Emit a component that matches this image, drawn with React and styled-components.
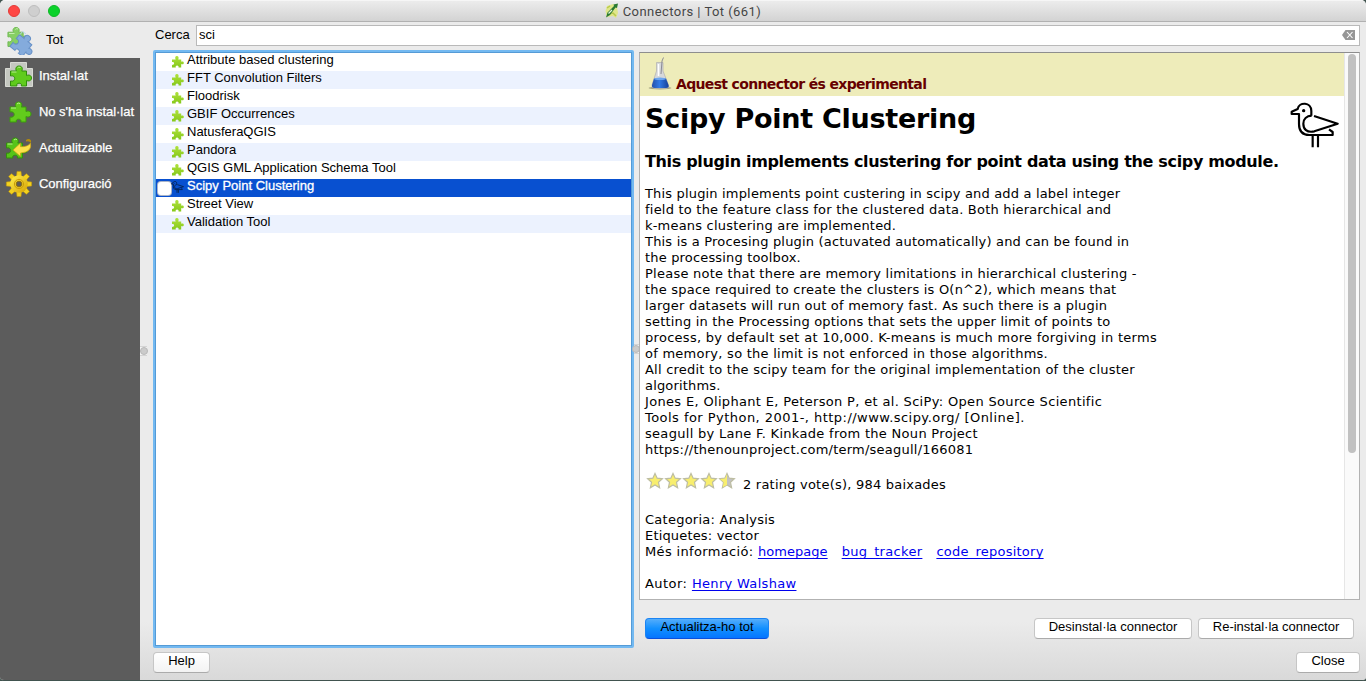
import React from "react";
import styled, { createGlobalStyle } from "styled-components";

const sans = `"Liberation Sans", Arial, sans-serif`;

const GlobalStyle = createGlobalStyle`
  * { box-sizing: border-box; }
  html, body { margin: 0; padding: 0; background: #41544f; overflow: hidden; }
  body { font-family: ${sans}; font-size: 13px; color: #000; }
  svg { display: block; flex: none; }
`;

const Window = styled.div`
  width: 1366px;
  height: 681px;
  display: flex;
  flex-direction: column;
  background: #ebebeb;
  border-bottom: 1px solid #41544f;
  border-radius: 5px 5px 4px 4px;
  overflow: hidden;
`;

const TitleBar = styled.header`
  position: relative;
  height: 22px;
  flex: none;
  display: flex;
  align-items: center;
  justify-content: center;
  gap: 4px;
  background: linear-gradient(#ececec, #d3d3d3);
  border-top: 1px solid #f6f6f6;
  border-bottom: 1px solid #b1b1b1;
  color: #454545;
  font-family: Roboto, ${sans};
  font-size: 13px;
  letter-spacing: 0.44px;
`;

const Lights = styled.div`
  position: absolute;
  left: 8px;
  top: 4px;
  display: flex;
  gap: 8px;
`;

const Light = styled.span`
  width: 12px;
  height: 12px;
  border-radius: 50%;
  background: ${(p) => p.$fill};
  border: 1px solid ${(p) => p.$edge};
`;

const Body = styled.div`
  flex: 1;
  display: flex;
  min-height: 0;
`;

const Sidebar = styled.nav`
  width: 140px;
  flex: none;
  background: #5c5c5c;
`;

const NavItem = styled.div`
  height: 36px;
  display: flex;
  align-items: center;
  gap: ${(p) => (p.$active ? 10 : 4)}px;
  padding-left: ${(p) => (p.$active ? 6 : 5)}px;
  background: ${(p) => (p.$active ? "#ebebeb" : "transparent")};
  color: ${(p) => (p.$active ? "#000" : "#fff")};
  -webkit-text-stroke: ${(p) => (p.$active ? 0 : 0.25)}px currentColor;
  white-space: nowrap;
`;

const NavIcon = styled.span`
  width: 30px;
  height: 30px;
  flex: none;
`;

const NavLabel = styled.span`
  line-height: 16px;
  letter-spacing: -0.04px;
`;

const Main = styled.main`
  flex: 1;
  min-width: 0;
  display: flex;
  flex-direction: column;
  background: linear-gradient(#ebebeb 600px, #d9d9d9);
`;

const SearchRow = styled.div`
  height: 28px;
  flex: none;
  display: flex;
  align-items: flex-start;
  padding: 3px 6px 0 15px;
  gap: 7px;
`;

const SearchLabel = styled.label`
  width: 34px;
  line-height: 19px;
  white-space: nowrap;
`;

const SearchField = styled.div`
  flex: 1;
  height: 21px;
  display: flex;
  align-items: center;
  justify-content: space-between;
  padding: 0 4px 2px 2px;
  background: #fff;
  border: 1px solid #b9b9b9;
`;

const Split = styled.div`
  height: 598px;
  flex: none;
  display: flex;
  padding-right: 6px;
`;

const Handle = styled.div`
  width: ${(p) => p.$width}px;
  flex: none;
  display: flex;
  align-items: center;
  justify-content: flex-start;
  padding-top: ${(p) => p.$drop}px;
`;

const Grip = styled.span`
  width: ${(p) => p.$width}px;
  height: 10px;
  flex: none;
  background: #f4f4f4;
  border-top: 1px solid #d4d4d4;
  border-bottom: 1px solid #d4d4d4;
  display: flex;
  align-items: center;
  &::before {
    content: "";
    width: 6px;
    height: 6px;
    flex: none;
    margin-left: ${(p) => p.$width - 7}px;
    border-radius: 50%;
    background: #cbcbcb;
    border: 1px solid #b8b8b8;
  }
`;

const List = styled.div`
  width: 481px;
  flex: none;
  border: 2px solid #73b9f1;
  border-radius: 2px;
  background: #fff;
  box-shadow: inset 0 0 0 1px #559bd6;
  padding: 1px;
`;

const Row = styled.div`
  height: 18px;
  display: flex;
  align-items: flex-start;
  padding-left: 2px;
  background: ${(p) => (p.$selected ? "#0850d0" : p.$alt ? "#ecf2fe" : "#fff")};
  color: ${(p) => (p.$selected ? "#fff" : "#000")};
  -webkit-text-stroke: ${(p) => (p.$selected ? 0.3 : 0)}px currentColor;
`;

const CheckSlot = styled.span`
  width: 13px;
  height: 13px;
  margin-top: 3px;
  flex: none;
  border-radius: 3px;
  background: ${(p) => (p.$on ? "#fff" : "transparent")};
  box-shadow: ${(p) => (p.$on ? "0 0 0 1px #a9b4c8" : "none")};
`;

const RowIcon = styled.span`
  width: 13px;
  margin: 2px 3px 0 0;
  flex: none;
`;

const RowLabel = styled.span`
  line-height: 14px;
  white-space: nowrap;
`;

const Right = styled.section`
  width: 721px;
  display: flex;
  flex-direction: column;
  padding-top: 2px;
`;

const Viewer = styled.div`
  height: 548px;
  display: flex;
  background: #fff;
  border: 1px solid #b2b2b2;
  border-top-color: #8e8e8e;
  overflow: hidden;
`;

const Page = styled.article`
  flex: 1;
  min-width: 0;
  font-family: Verdana, "DejaVu Sans", sans-serif;
  font-size: 13px;
`;

const ScrollTrack = styled.div`
  width: 15px;
  flex: none;
  background: #fafafa;
  border-left: 1px solid #e6e6e6;
  padding: 1px 3px;
`;

const ScrollThumb = styled.div`
  width: 8px;
  height: 399px;
  border-radius: 4px;
  background: #c1c1c1;
`;

const Banner = styled.div`
  height: 43px;
  display: flex;
  align-items: flex-start;
  gap: 3px;
  padding: 4px 0 0 7px;
  background: #eeecba;
  color: #660000;
  font-weight: bold;
  font-size: 14px;
  letter-spacing: -0.66px;
`;

const BannerText = styled.span`
  margin-top: 18px;
  line-height: 18px;
  white-space: nowrap;
`;

const Content = styled.div`
  padding: 6px 5px 0;
`;

const Heading = styled.div`
  height: 46px;
  display: flex;
  justify-content: space-between;
  align-items: flex-start;
`;

const Title = styled.h1`
  margin: 0;
  font-size: 27px;
  line-height: 34px;
  letter-spacing: -0.26px;
  white-space: nowrap;
`;

const Subtitle = styled.h2`
  margin: 0;
  height: 38px;
  font-size: 16px;
  line-height: 28px;
  letter-spacing: -0.34px;
  white-space: nowrap;
`;

const Line = styled.div`
  height: 16px;
  line-height: 16px;
  white-space: pre;
  letter-spacing: ${(p) => p.$track ?? 0.17}px;
`;

const Rating = styled.div`
  display: flex;
  height: 22px;
  margin: 13px 0 19px 1px;
  gap: 7px;
  align-items: flex-start;
`;

const Stars = styled.span`
  display: flex;
  width: 90px;
  padding-top: 1px;
`;

const RatingText = styled(Line)`
  padding-top: 6px;
  height: 22px;
`;

const Gap = styled.div`
  height: 16px;
`;

const Link = styled.a`
  color: #0000ee;
  text-decoration: underline;
  text-decoration-skip-ink: none;
  text-underline-offset: 2px;
  text-decoration-thickness: 1px;
  margin-right: 14px;
  letter-spacing: ${(p) => p.$track ?? 0.17}px;
`;

const Actions = styled.div`
  display: flex;
  gap: 6px;
  padding: 18px 6px 0 6px;
`;

const Spacer = styled.span`
  flex: 1;
`;

const Button = styled.button`
  width: ${(p) => p.$width}px;
  height: 21px;
  padding: 0 0 3px;
  font: 13px/16px ${sans};
  color: #000;
  white-space: nowrap;
  border: 1px solid ${(p) => (p.$primary ? "#1a84f4" : "#c6c6c6")};
  border-bottom-color: ${(p) => (p.$primary ? "#0a50dd" : "#ababab")};
  border-radius: 4px;
  background: ${(p) => (p.$primary ? "linear-gradient(#55adfb, #1290ff 50%, #0575ff)" : p.$soft ? "linear-gradient(#fff, #f3f3f3)" : "#fff")};
`;

const Footer = styled.footer`
  display: flex;
  justify-content: space-between;
  padding: 4px 6px 0 13px;
`;

const PUZZLE =
  "M1 6H7C5.8 4.5 6 1 9.6 1S13.3 4.5 12.2 6H17V10.6C19 9.4 22 10.2 22 13S19 16.6 17 15.4V21H11.8C12.6 19.3 11.3 18.2 9.6 18.2S6.6 19.3 7.4 21H1V16C3.4 16.8 5.2 15.3 5.2 13.5S3.4 10.2 1 11Z";

function RowPuzzle({ id }) {
  return (
    <svg width={13} height={13} viewBox="0 0 13 13">
      <defs>
        <linearGradient id={id} x1="0" y1="0" x2="0" y2="1">
          <stop offset="0" stopColor="#b0e23c" />
          <stop offset="1" stopColor="#86c91c" />
        </linearGradient>
      </defs>
      <path
        d="M1 4.600H4.700C3.700 2.500 4.300 1 5.900 1S8.100 2.500 7.200 4.600H10.200V6.800C11.500 6.300 12.800 6.600 12.800 8S11.500 9.600 10.200 9V12.400H7.500C7.900 11.300 7.200 10.400 6.100 10.400S4.400 11.300 4.800 12.400H1V9.900C2.400 9.900 3.100 9.200 3.100 8.300S2.400 6.700 1 7Z"
        fill={`url(#${id})`}
      />
    </svg>
  );
}

function AllIcon() {
  return (
    <svg width="30" height="30" viewBox="0 0 30 30">
      <path d={PUZZLE} transform="translate(1,1.500) scale(0.950)" fill="#86cf64" stroke="#70b853" />
      <path d="M3 8.500H8.500M9.500 4.500Q10.500 3 12 4" stroke="#c4efae" fill="none" />
      <path d={PUZZLE} transform="translate(16.400,4.400) rotate(39)" fill="#84abdc" stroke="#6690c7" />
      <path d="M14 9.500L16.700 6.500L20 9" stroke="#bdd5f2" fill="none" />
    </svg>
  );
}

function InstalledIcon() {
  return (
    <svg width="30" height="30" viewBox="0 0 30 30">
      <path d="M5.500 1.500H21.500V7.500H27.500V25.500H0.500V7.500H5.500Z" fill="#c5c8c1" stroke="#d8dad4" />
      <path d={PUZZLE} transform="translate(4.500,4)" fill="#5fcb1c" stroke="#2f8d0b" />
      <path d="M6.500 11H11.500M12.500 7Q13.500 5.500 15.500 6.500" stroke="#b9f08d" fill="none" />
    </svg>
  );
}

function NotInstalledIcon() {
  return (
    <svg width="30" height="30" viewBox="0 0 30 30">
      <path d={PUZZLE} transform="translate(4,4)" fill="#62cc1c" stroke="#3a9c0d" />
      <path d="M6 11H11M12 7Q13 5.500 15 6.500" stroke="#b9f08d" fill="none" />
    </svg>
  );
}

function UpgradeIcon() {
  return (
    <svg width="30" height="30" viewBox="0 0 30 30">
      <path d={PUZZLE} transform="translate(0.500,4)" fill="#56c419" stroke="#338f0d" />
      <path d="M2.500 11H7.500M9 7Q10 5.500 12 6.500" stroke="#b9f08d" fill="none" />
      <path d="M21 7Q24 5 26 7.500V10Q24.500 7.500 21 8.500Z" fill="#b58b0b" />
      <path d="M8 17L15.500 10V13.700Q23 14 25.500 10Q27.500 19 15.500 20V23.500Z" fill="#fbe24b" stroke="#c79f12" strokeWidth="0.700" />
    </svg>
  );
}

function GearIcon() {
  const teeth = [0, 45, 90, 135, 180, 225, 270, 315];
  return (
    <svg width="30" height="30" viewBox="0 0 30 30">
      <defs>
        <linearGradient id="gear" x1="0" y1="0" x2="1" y2="1">
          <stop offset="0" stopColor="#fff04e" />
          <stop offset="1" stopColor="#d5a204" />
        </linearGradient>
      </defs>
      <g fill="#f2d21e" stroke="#c49a0a" strokeWidth="0.600">
        {teeth.map((a) => (
          <path key={a} d="M11.500 8L12 2.400H16L16.500 8Z" transform={`rotate(${a} 14 15)`} />
        ))}
      </g>
      <circle cx="14" cy="15" r="8.800" fill="url(#gear)" />
      <circle cx="14" cy="15" r="4.600" fill="none" stroke="#c99d08" />
      <circle cx="14" cy="15" r="2.800" fill="#5c5c5c" stroke="#8e6b00" strokeWidth="0.800" />
    </svg>
  );
}

function Seagull({ width, height, weight = 6.5, color = "#000" }) {
  return (
    <svg width={width} height={height} viewBox="182 305 147 138">
      <g fill="none" stroke={color} strokeWidth={weight} strokeLinejoin="round">
        <path d="M246 346V332C246 304 209 304 205 326L187 334V341H209V371C209 395 222 404 240 404H310V395L299 387" />
        <path d="M254 347L325 370L255 393C232 398 222 386 222 370C222 356 232 347 247 346" />
        <path d="M250 404V441M266 404V441" />
      </g>
      <circle cx="223" cy="331" r="5" fill={color} />
    </svg>
  );
}

function Flask() {
  return (
    <svg width="26" height="34" viewBox="0 0 26 34">
      <defs>
        <linearGradient id="liquid" x1="0" x2="1" y1="0" y2="0">
          <stop offset="0" stopColor="#2450a8" />
          <stop offset="0.450" stopColor="#3079e6" />
          <stop offset="1" stopColor="#173f96" />
        </linearGradient>
      </defs>
      <ellipse cx="13" cy="31" rx="11.500" ry="1.500" fill="#77755c" opacity="0.600" />
      <path d="M9.500 5.500H16V14L21.500 28Q22.500 31.200 19 31.200H7.500Q4.500 31.200 5 28L9.500 14Z" fill="#d6d8da" stroke="#b0b0b0" strokeWidth="0.700" />
      <path d="M7 21.500H19L21.500 28Q22.500 31 19 31H7.500Q4.500 31 5 28Z" fill="url(#liquid)" />
      <path d="M11.500 7V19" stroke="#fff" strokeWidth="1.500" />
      <path d="M14 17L15 4L16.500 0.500" stroke="#8c8c94" fill="none" />
      <ellipse cx="13" cy="21.800" rx="6" ry="1.200" fill="#6da6ef" />
    </svg>
  );
}

function Star({ half }) {
  const d = "M9 1.500L11.200 6.200L16.400 6.800L12.500 10.300L13.600 15.700L9 13L4.400 15.700L5.500 10.300L1.600 6.800L6.800 6.200Z";
  return (
    <svg width="18" height="18" viewBox="0 0 18 18">
      <path d={d} fill={half ? "#c2c2c2" : "#f8ee6e"} stroke="#bdbda2" strokeWidth="1.200" />
      {half && <path d="M9 2V13L4.700 15.200L5.700 10.300L2 7L7 6.500Z" fill="#f8ee6e" />}
    </svg>
  );
}

function AppIcon() {
  return (
    <svg width="14" height="16" viewBox="0 0 14 16">
      <path d="M2 3L8 1L12 4L13 10L11 15L8 13L2 14L0.500 8Z" fill="#dfe78a" />
      <path d="M2 5L5 3M3 11L8 10L11 13" stroke="#b9c84c" fill="none" strokeWidth="1.500" />
      <path d="M1 14.500L2.500 9.500L9 3L8.500 1.500L13 0.500L12 5L10.500 4.500L5 12Z" fill="#2a7a30" />
      <path d="M3.500 10.500L7 7" stroke="#e6f3dc" strokeWidth="1.200" />
    </svg>
  );
}

function ClearIcon() {
  return (
    <svg width="13" height="10" viewBox="0 0 13 10">
      <path d="M3.500 0H13V10H3.500L0 5Z" fill="#969696" />
      <path d="M5 2L10.500 8M10.500 2L5 8" stroke="#fff" strokeWidth="1.100" />
    </svg>
  );
}

const navItems = [
  { label: "Tot", icon: <AllIcon />, active: true },
  { label: "Instal·lat", icon: <InstalledIcon /> },
  { label: "No s'ha instal·lat", icon: <NotInstalledIcon /> },
  { label: "Actualitzable", icon: <UpgradeIcon /> },
  { label: "Configuració", icon: <GearIcon /> },
];

const plugins = [
  "Attribute based clustering",
  "FFT Convolution Filters",
  "Floodrisk",
  "GBIF Occurrences",
  "NatusferaQGIS",
  "Pandora",
  "QGIS GML Application Schema Tool",
  "Scipy Point Clustering",
  "Street View",
  "Validation Tool",
];

const description = [
  { text: "This plugin implements point custering in scipy and add a label integer", track: 0.17 },
  { text: "field to the feature class for the clustered data. Both hierarchical and", track: 0.22 },
  { text: "k-means clustering are implemented.", track: 0.2 },
  { text: "This is a Procesing plugin (actuvated automatically) and can be found in", track: 0.19 },
  { text: "the processing toolbox.", track: 0.17 },
  { text: "Please note that there are memory limitations in hierarchical clustering -", track: 0.24 },
  { text: "the space required to create the clusters is O(n^2), which means that", track: 0.22 },
  { text: "larger datasets will run out of memory fast. As such there is a plugin", track: 0.22 },
  { text: "setting in the Processing options that sets the upper limit of points to", track: 0.19 },
  { text: "process, by default set at 10,000. K-means is much more forgiving in terms", track: 0.29 },
  { text: "of memory, so the limit is not enforced in those algorithms.", track: 0.26 },
  { text: "All credit to the scipy team for the original implementation of the cluster", track: 0.22 },
  { text: "algorithms.", track: 0.17 },
  { text: "Jones E, Oliphant E, Peterson P, et al. SciPy: Open Source Scientific", track: 0.33 },
  { text: "Tools for Python, 2001-, http://www.scipy.org/ [Online].", track: 0.46 },
  { text: "seagull by Lane F. Kinkade from the Noun Project", track: 0.3 },
  { text: "https://thenounproject.com/term/seagull/166081", track: 0.23 },
];

export default function App() {
  return (
    <Window>
      <GlobalStyle />
      <TitleBar>
        <Lights>
          <Light $fill="#fe4744" $edge="#e23b37" />
          <Light $fill="#cfcfcf" $edge="#bdbdbd" />
          <Light $fill="#0bd22b" $edge="#0fb726" />
        </Lights>
        <AppIcon />
        <span>Connectors | Tot (661)</span>
      </TitleBar>
      <Body>
        <Sidebar>
          {navItems.map((n) => (
            <NavItem key={n.label} $active={n.active}>
              <NavIcon>{n.icon}</NavIcon>
              <NavLabel>{n.label}</NavLabel>
            </NavItem>
          ))}
        </Sidebar>
        <Main>
          <SearchRow>
            <SearchLabel>Cerca</SearchLabel>
            <SearchField>
              <span>sci</span>
              <ClearIcon />
            </SearchField>
          </SearchRow>
          <Split>
            <Handle $width={13} $drop={4}><Grip $width={7} /></Handle>
            <List>
              {plugins.map((name, i) => {
                const selected = name === "Scipy Point Clustering";
                return (
                  <Row key={name} $alt={i % 2 === 1} $selected={selected}>
                    <CheckSlot $on={selected} />
                    <RowIcon>
                      {selected ? (
                        <Seagull width={13} height={12} weight={10} color="#06214f" />
                      ) : (
                        <RowPuzzle id={`puzzle-${i}`} />
                      )}
                    </RowIcon>
                    <RowLabel>{name}</RowLabel>
                  </Row>
                );
              })}
            </List>
            <Handle $width={5} $drop={0}><Grip $width={5} /></Handle>
            <Right>
              <Viewer>
                <Page>
                  <Banner>
                    <Flask />
                    <BannerText>Aquest connector és experimental</BannerText>
                  </Banner>
                  <Content>
                    <Heading>
                      <Title>Scipy Point Clustering</Title>
                      <Seagull width={49} height={46} />
                    </Heading>
                    <Subtitle>This plugin implements clustering for point data using the scipy module.</Subtitle>
                    {description.map(({ text, track }) => (
                      <Line key={text} $track={track}>{text}</Line>
                    ))}
                    <Rating>
                      <Stars>
                        <Star /><Star /><Star /><Star /><Star half />
                      </Stars>
                      <RatingText $track={0.22}>2 rating vote(s), 984 baixades</RatingText>
                    </Rating>
                    <Line $track={0.25}>Categoria: Analysis</Line>
                    <Line>Etiquetes: vector</Line>
                    <Line $track={0.34}>
                      {"Més informació: "}
                      <Link $track={0.05}>homepage</Link>
                      <Link $track={0.32}>bug_tracker</Link>
                      <Link $track={0.24}>code_repository</Link>
                    </Line>
                    <Gap />
                    <Line $track={0.44}>
                      {"Autor: "}
                      <Link $track={0.32}>Henry Walshaw</Link>
                    </Line>
                  </Content>
                </Page>
                <ScrollTrack>
                  <ScrollThumb />
                </ScrollTrack>
              </Viewer>
              <Actions>
                <Button $primary $width={124}>Actualitza-ho tot</Button>
                <Spacer />
                <Button $width={158}>Desinstal·la connector</Button>
                <Button $width={156}>Re-instal·la connector</Button>
              </Actions>
            </Right>
          </Split>
          <Footer>
            <Button $soft $width={57}>Help</Button>
            <Button $width={64}>Close</Button>
          </Footer>
        </Main>
      </Body>
    </Window>
  );
}
